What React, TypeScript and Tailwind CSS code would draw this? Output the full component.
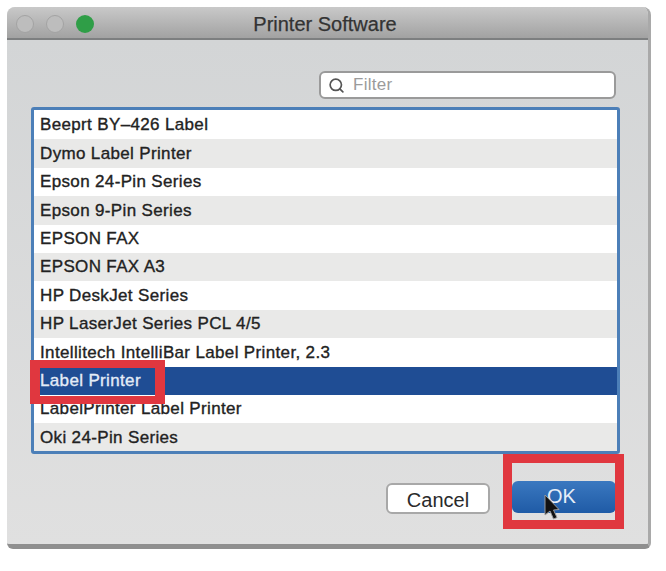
import { Search } from 'lucide-react'

const printers = [
    'Beeprt BY–426 Label',
    'Dymo Label Printer',
    'Epson 24-Pin Series',
    'Epson 9-Pin Series',
    'EPSON FAX',
    'EPSON FAX A3',
    'HP DeskJet Series',
    'HP LaserJet Series PCL 4/5',
    'Intellitech IntelliBar Label Printer, 2.3',
    'Label Printer',
    'LabelPrinter Label Printer',
    'Oki 24-Pin Series',
]

function PrinterRow({ name, index }: { name: string; index: number }) {
    const selected = name === 'Label Printer'
    return (
        <div
            className={`h-[28.4px] pl-[6px] flex items-center text-[17px] tracking-[0.35px] [-webkit-text-stroke:0.35px] ${selected
                ? 'bg-[#1f4d94] text-[#e4ecf7]'
                : index % 2 === 0
                    ? 'bg-white text-[#222222]'
                    : 'bg-[#e9e9e8] text-[#222222]'
                }`}
        >
            {name}
        </div>
    )
}

export default function App() {
    return (
        <div className="relative w-[666px] h-[571px] bg-white pt-[7px] pl-[7px] font-['Liberation_Sans',Arial,sans-serif]">
            <div className="w-[644px] h-[542px] flex flex-col overflow-hidden rounded-t-[8px] rounded-b-[6px] bg-[#dcdddd] border-r-[3px] border-b-[5px] border-b-[#8f8f8f] border-r-[#a9a9a9]">
                <div className="relative h-[33px] shrink-0 flex items-center justify-center bg-gradient-to-b from-[#c9c9c9] to-[#a2a2a2] border-b-2 border-[#7d7f80]">
                    <div className="absolute left-[9px] top-[8px] flex gap-[12px]">
                        <span className="w-[18px] h-[18px] rounded-full bg-[#bdbdbd] border border-[#a3a3a3]" />
                        <span className="w-[18px] h-[18px] rounded-full bg-[#bdbdbd] border border-[#a3a3a3]" />
                        <span className="w-[18px] h-[18px] rounded-full bg-[#2f9e47]" />
                    </div>
                    <span className="text-[20px] text-[#333333] mr-[5px] mt-[3px] [-webkit-text-stroke:0.25px]">Printer Software</span>
                </div>

                <div className="flex-1 flex flex-col pl-[24px] pr-[28px] bg-gradient-to-b from-[#d3d5d6] to-[#e0e0e0]">
                    <div className="flex justify-end mt-[31px] pr-[4px]">
                        <div className="w-[297px] h-[28px] flex items-center gap-[8px] pl-[7px] rounded-[6px] bg-white border-2 border-[#9a9a9a]">
                            <Search size={17} strokeWidth={2.4} className="text-[#555555]" />
                            <span className="text-[17px] tracking-[0.3px] text-[#9b9b9b]">Filter</span>
                        </div>
                    </div>
                    <div className="mt-[8px] h-[347px] pt-[1px] border-[3px] border-[#4c7fb8] rounded-[3px] overflow-hidden bg-white">
                        {printers.map((name, i) => (
                            <PrinterRow key={name} name={name} index={i} />
                        ))}
                    </div>
                    <div className="flex justify-end gap-[22px] mt-[27px] pr-[4px]">
                        <button className="w-[104px] h-[31px] mt-[2px] pb-[5px] rounded-[6px] bg-white border-2 border-[#a8a8a8] text-[20px] text-[#2a2a2a]">Cancel</button>
                        <button className="w-[104px] h-[32px] pb-[5px] pr-[5px] rounded-[6px] bg-gradient-to-b from-[#3a78c0] to-[#1f5ba6] text-[20px] text-[#e6eef8]">OK</button>
                    </div>
                </div>
            </div>

            <div className="absolute left-[30px] top-[360px] w-[135px] h-[44px] border-x-[10px] border-t-[8px] border-b-[8px] border-[#e0373f]" />
            <div className="absolute left-[503px] top-[454px] w-[121px] h-[75px] border-[9px] border-[#e0373f]" />

            <svg className="absolute left-[543px] top-[494px]" width="18" height="28" viewBox="0 0 18 28">
                <path d="M2 1 L2 21 L7 17 L10.5 25 L14 23.5 L10.5 16 L16 15.5 Z" fill="#111111" stroke="#9a9a9a" strokeWidth="1" />
            </svg>
        </div>
    )
}
